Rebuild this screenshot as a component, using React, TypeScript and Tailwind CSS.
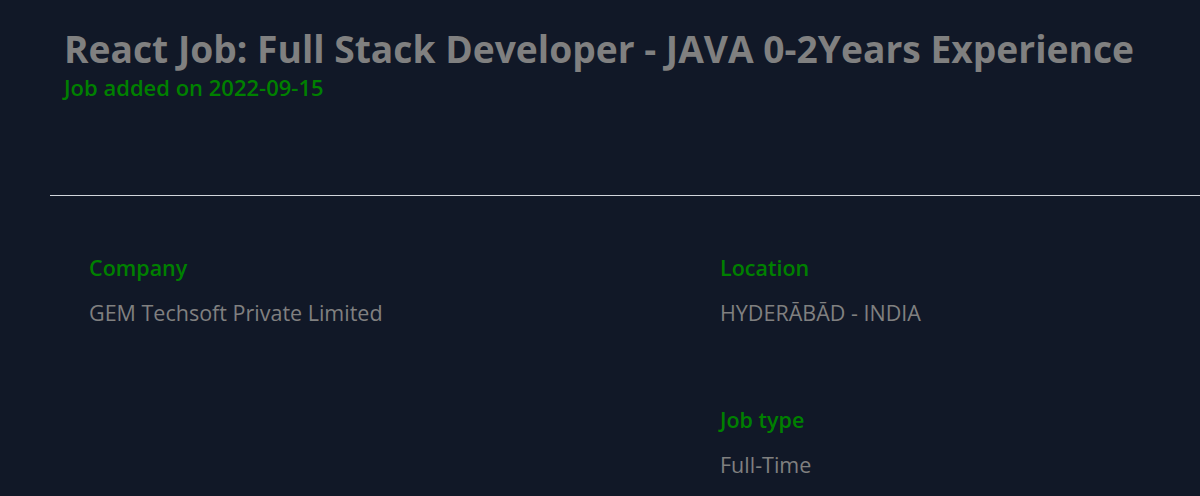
export default function App() {
  const font = { fontFamily: '"Open Sans", "Noto Sans", sans-serif' };
  return (
    <div className="min-h-screen bg-[#111827]" style={font}>
      {/* Header */}
      <div className="pl-[64px] pt-[24px] h-[195px]">
        <h1 className="text-[37.2px] leading-[50px] font-bold text-[#808080]">
          React Job: Full Stack Developer - JAVA 0-2Years Experience
        </h1>
        <p className="text-[22px] leading-[26px] font-semibold text-[#008000]">Job added on 2022-09-15</p>
      </div>
      <div className="ml-[50px] h-px bg-[#d1d5db]" />

      {/* Details */}
      <div className="grid grid-cols-[631px_1fr] pl-[89px] pt-[58px] gap-y-[79px]">
        <div>
          <p className="text-[21.5px] leading-[28px] font-semibold text-[#008000]">Company</p>
          <p className="mt-[17px] text-[21.5px] leading-[28px] text-[#808080]">GEM Techsoft Private Limited</p>
        </div>
        <div>
          <p className="text-[21.5px] leading-[28px] font-semibold text-[#008000]">Location</p>
          <p className="mt-[17px] text-[21.5px] leading-[28px] text-[#808080]">HYDERĀBĀD - INDIA</p>
        </div>
        <div />
        <div>
          <p className="text-[21.5px] leading-[28px] font-semibold text-[#008000]">Job type</p>
          <p className="mt-[17px] text-[21.5px] leading-[28px] text-[#808080]">Full-Time</p>
        </div>
      </div>
    </div>
  );
}
